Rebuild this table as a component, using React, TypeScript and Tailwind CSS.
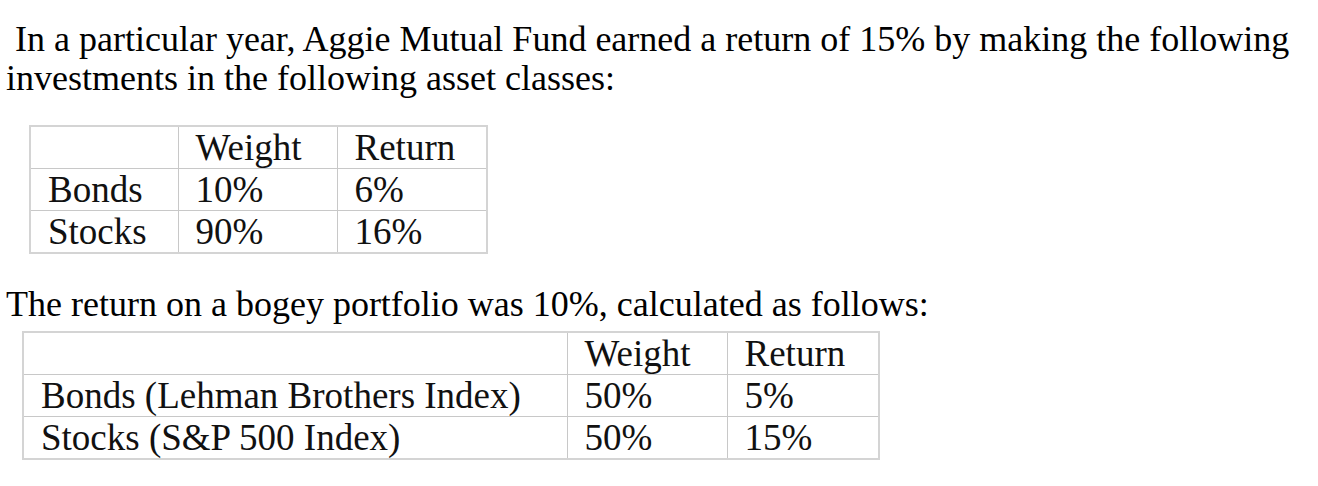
const firstRows = [
  { label: 'Bonds', weight: '10%', ret: '6%' },
  { label: 'Stocks', weight: '90%', ret: '16%' },
];

const bogeyRows = [
  { label: 'Bonds (Lehman Brothers Index)', weight: '50%', ret: '5%' },
  { label: 'Stocks (S&P 500 Index)', weight: '50%', ret: '15%' },
];

type Row = { label: string; weight: string; ret: string };

function WeightTable({ rows, widths }: { rows: Row[]; widths: [string, string, string] }) {
  const cell = 'border border-[#c8c8c8] h-[41px] p-0 pl-[17px] text-left align-middle font-normal leading-[41px] whitespace-nowrap';
  return (
    <table className="table-fixed border-collapse border-2 border-[#d4d4d4] text-[37px] text-[#111]">
      <colgroup>
        <col className={widths[0]} />
        <col className={widths[1]} />
        <col className={widths[2]} />
      </colgroup>
      <thead>
        <tr>
          <th className={cell}></th>
          <th className={cell}>Weight</th>
          <th className={cell}>Return</th>
        </tr>
      </thead>
      <tbody>
        {rows.map((r) => (
          <tr key={r.label}>
            <td className={cell}>{r.label}</td>
            <td className={cell}>{r.weight}</td>
            <td className={cell}>{r.ret}</td>
          </tr>
        ))}
      </tbody>
    </table>
  );
}

export default function App() {
  return (
    <div className="w-[1318px] h-[486px] overflow-hidden bg-white text-black font-['Liberation_Serif',serif] pt-[20px] pl-[6px]">
      <p className="text-[36px] leading-[39px]">
        {'\u00a0'}In a particular year, Aggie Mutual Fund earned a return of 15% by making the following
        <br />
        investments in the following asset classes:
      </p>

      <div className="mt-[27px] ml-[23px]">
        <WeightTable rows={firstRows} widths={['w-[148px]', 'w-[159px]', 'w-[150px]']} />
      </div>

      <p className="mt-[31px] text-[36px] leading-[39px]">
        The return on a bogey portfolio was 10%, calculated as follows:
      </p>

      <div className="mt-[7px] ml-[16px]">
        <WeightTable rows={bogeyRows} widths={['w-[544px]', 'w-[160px]', 'w-[152px]']} />
      </div>
    </div>
  );
}
